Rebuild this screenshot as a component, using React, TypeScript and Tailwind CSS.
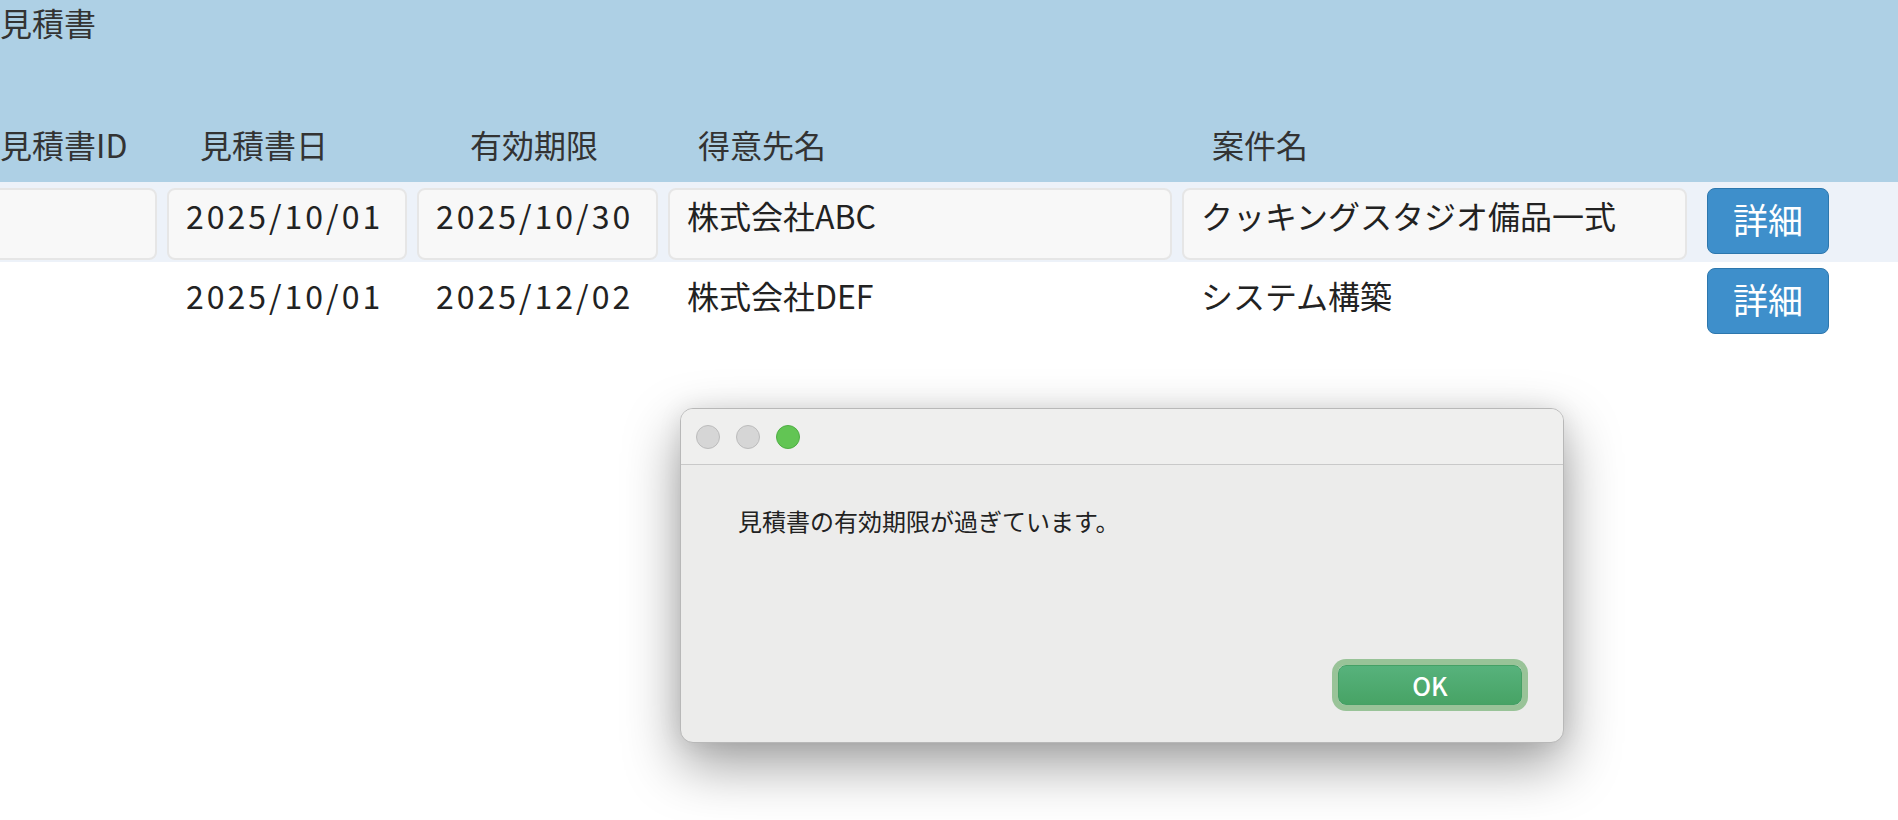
import { ReactNode } from "react";

const font = { fontFamily: '"Noto Sans CJK JP", "Noto Sans", sans-serif' };

const cols =
  "grid grid-cols-[240px_240px_241px_504px_505px_132px] gap-x-[10px] -ml-[83px]";

const headers = [
  { label: "見積書ID", pad: "pl-[83px]" },
  { label: "見積書日", pad: "pl-[33px]" },
  { label: "有効期限", pad: "pl-[53px]" },
  { label: "得意先名", pad: "pl-[30px]" },
  { label: "案件名", pad: "pl-[30px]" },
];

const rows = [
  {
    id: "",
    date: "2025/10/01",
    limit: "2025/10/30",
    client: "株式会社ABC",
    project: "クッキングスタジオ備品一式",
    editing: true,
  },
  {
    id: "",
    date: "2025/10/01",
    limit: "2025/12/02",
    client: "株式会社DEF",
    project: "システム構築",
    editing: false,
  },
];

function Cell({ editing, date, children }: { editing: boolean; date?: boolean; children: ReactNode }) {
  return (
    <div
      className={
        "h-[72px] pl-[17px] pt-[3px] leading-[44px] " +
        (date ? "tracking-[3px] " : "") +
        (editing
          ? "rounded-[8px] border-2 border-[#e6e6e6] bg-[#f8f8f8]"
          : "border-2 border-transparent")
      }
    >
      {children}
    </div>
  );
}

export default function App() {
  return (
    <div className="relative min-h-screen overflow-hidden bg-white text-[#222]" style={font}>
      <div className="flex h-[182px] flex-col bg-[#aed0e5]">
        <h1 className="text-[32px] leading-[44px] text-[#333]">見積書</h1>
        <div className={cols + " mt-auto mb-[16px] text-[32px] leading-[44px] text-[#333]"}>
          {headers.map((h) => (
            <div key={h.label} className={h.pad}>
              {h.label}
            </div>
          ))}
        </div>
      </div>

      {rows.map((r, i) => (
        <div
          key={i}
          className={"h-[80px] pt-[6px] text-[32px] " + (r.editing ? "bg-[#edf2f9]" : "bg-white")}
        >
          <div className={cols}>
            <Cell editing={r.editing}>{r.id}</Cell>
            <Cell editing={r.editing} date>
              {r.date}
            </Cell>
            <Cell editing={r.editing} date>
              {r.limit}
            </Cell>
            <Cell editing={r.editing}>{r.client}</Cell>
            <Cell editing={r.editing}>{r.project}</Cell>
            <div className="pl-[10px]">
              <button className="h-[66px] w-[122px] rounded-[8px] border border-[#2d77ad] bg-[#3e8fcb] pb-[5px] text-[35px] leading-[50px] text-white">
                詳細
              </button>
            </div>
          </div>
        </div>
      ))}

      {/* modal alert window */}
      <div className="absolute left-[680px] top-[408px] flex h-[335px] w-[884px] flex-col overflow-hidden rounded-[13px] border border-[#b8b8b8] bg-[#ececeb] shadow-[0_22px_55px_rgba(0,0,0,0.38),0_0_24px_rgba(0,0,0,0.08)]">
        <div className="flex h-[56px] items-center gap-[16px] border-b border-[#c9c9c9] bg-[#efefee] pl-[15px]">
          <span className="h-[24px] w-[24px] rounded-full border border-[#bcbcbc] bg-[#d6d6d6]" />
          <span className="h-[24px] w-[24px] rounded-full border border-[#bcbcbc] bg-[#d6d6d6]" />
          <span className="h-[24px] w-[24px] rounded-full border border-[#4fae44] bg-[#62c554]" />
        </div>
        <div className="flex flex-1 flex-col pl-[57px] pr-[41px] pt-[40px] pb-[37px]">
          <p className="text-[24px] leading-[32px] text-[#222]">見積書の有効期限が過ぎています。</p>
          <div className="mt-auto flex justify-end">
            <button className="h-[40px] w-[184px] rounded-[8px] border border-[#45a065] bg-gradient-to-b from-[#57b27c] to-[#47a365] text-[25px] font-medium leading-[36px] text-white ring-[6px] ring-[#99c398]">
              OK
            </button>
          </div>
        </div>
      </div>
    </div>
  );
}
